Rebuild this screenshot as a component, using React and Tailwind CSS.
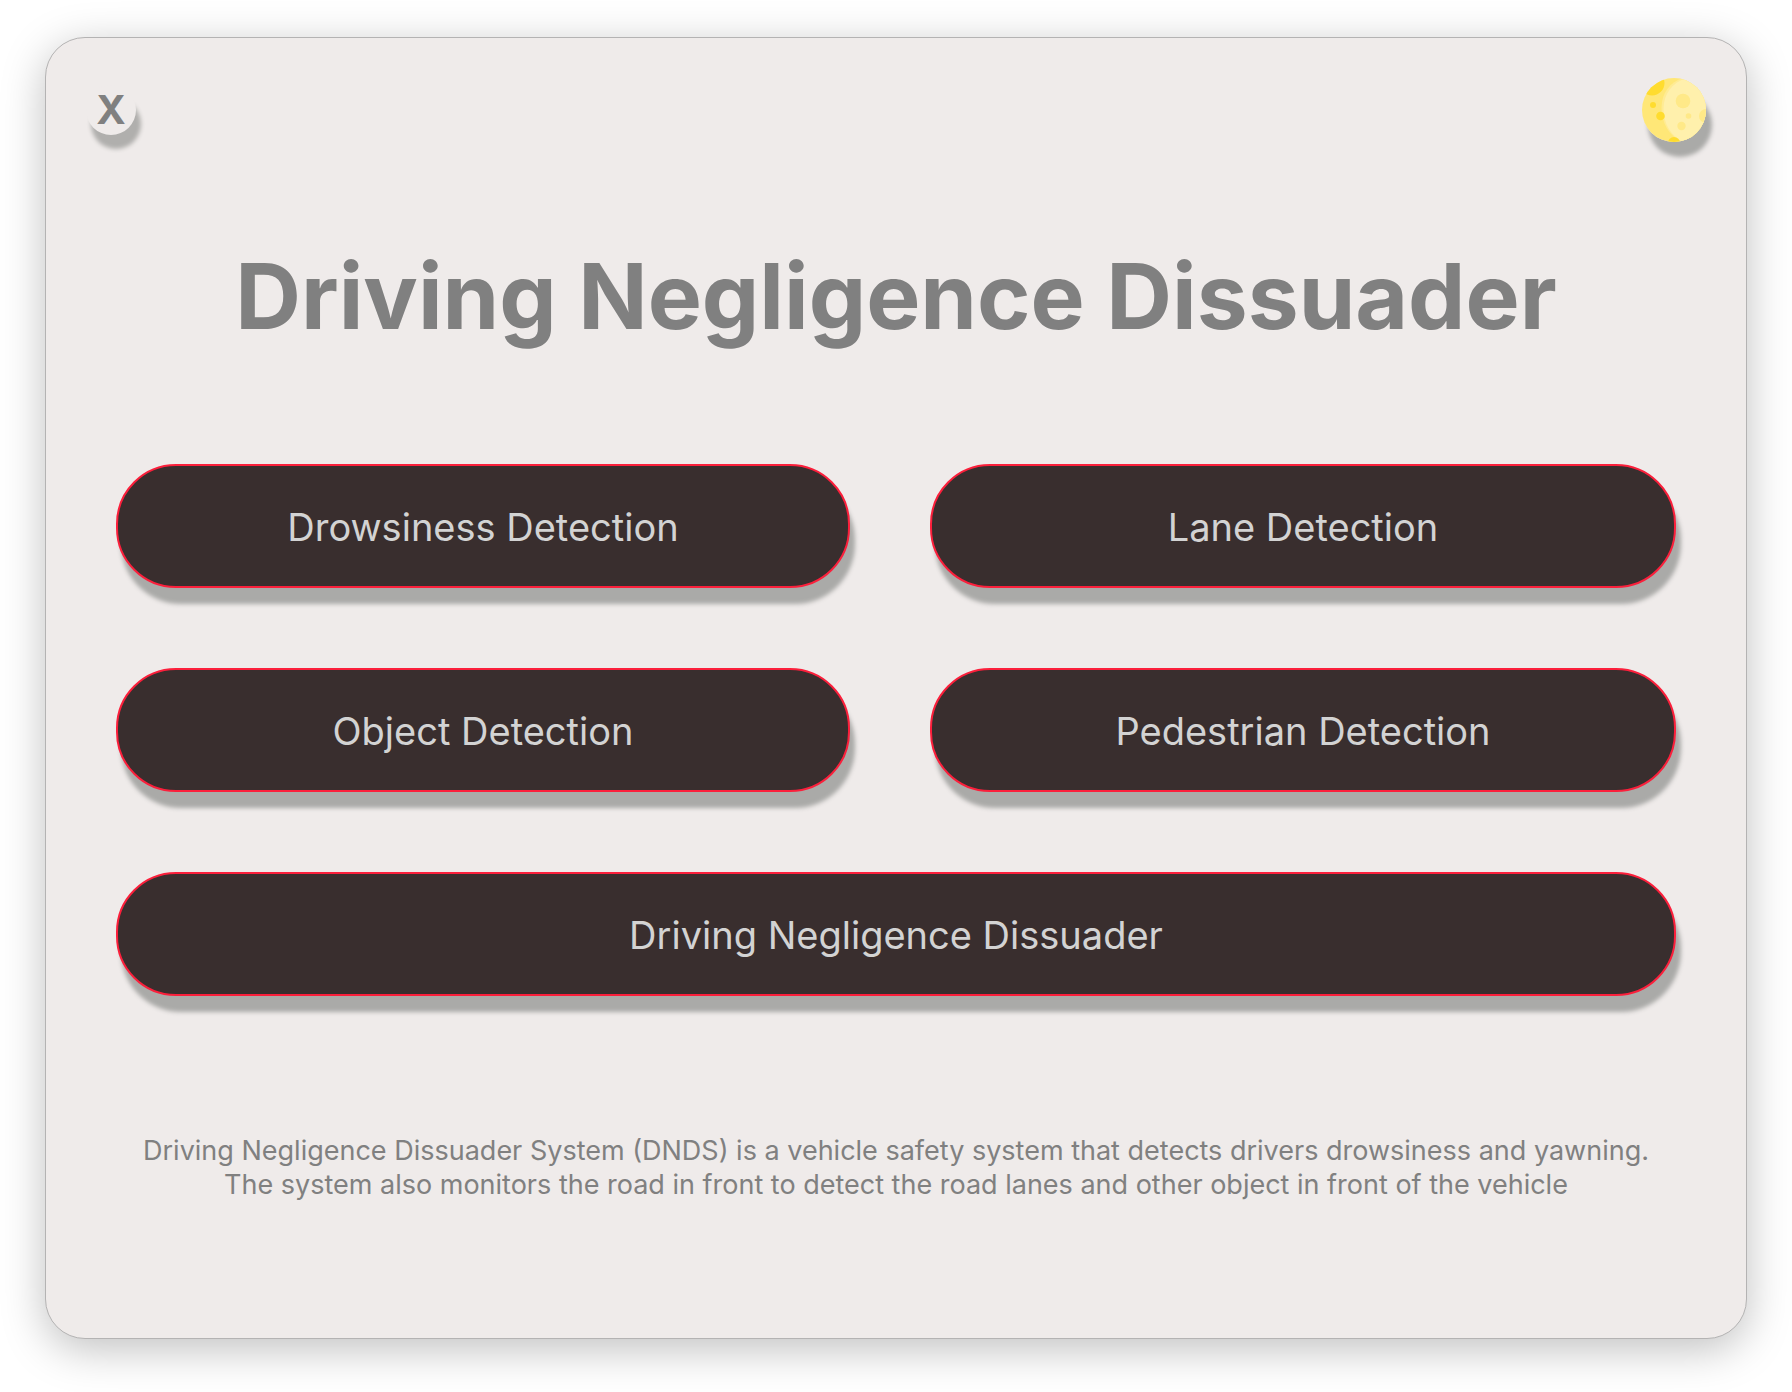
const rows = [
  "Drowsiness Detection",
  "Lane Detection",
  "Object Detection",
  "Pedestrian Detection",
];

const pill =
  "flex h-[124px] items-center justify-center rounded-[60px] border-2 border-[#fb1f3b] bg-[#392e2e] pt-0.5 text-[38px] text-[#d3d3d3] shadow-[5px_16px_4px_#aaaaa8]";

function Moon() {
  return (
    <svg viewBox="0 0 64 64" className="size-16" aria-hidden="true">
      <defs>
        <clipPath id="disc">
          <circle cx="32" cy="32" r="32" />
        </clipPath>
      </defs>
      <g clipPath="url(#disc)">
        <rect width="64" height="64" fill="#ffe777" />
        <circle cx="10" cy="5" r="12.5" fill="#ffdc2e" />
        <path d="M41 0C28 4 19.500 15 19.500 30s8 28 20 34H64V0Z" fill="#ffeb94" />
        <path d="M44 0C30 5 21.500 16 21.500 31s8 28 20 33H64V0Z" fill="#fff0ac" />
        <circle cx="11" cy="27" r="3" fill="#ffdc2e" />
        <circle cx="18.500" cy="38" r="4.300" fill="#ffdc2e" />
        <circle cx="32" cy="65" r="6" fill="#ffdc2e" />
        <circle cx="41" cy="23" r="7.300" fill="#ffe988" />
        <circle cx="46.500" cy="38" r="2.800" fill="#ffe988" />
        <circle cx="39.500" cy="48" r="4.200" fill="#ffe988" />
        <circle cx="64" cy="38" r="7" fill="#ffe988" />
      </g>
    </svg>
  );
}

export default function App() {
  return (
    <div className="min-h-screen bg-white px-[45px] pt-[37px] pb-[53px] font-['Inter',sans-serif]">
      <main className="rounded-[40px] border border-[#b4b3b3] bg-[#efebea] px-[70px] pb-[136px] shadow-[0_10px_44px_rgba(0,0,0,0.25)]">
        <header className="-mx-[30px] flex items-center justify-between pt-10">
          <button
            type="button"
            aria-label="Close"
            className="flex size-[50px] items-center justify-center rounded-full bg-[#efebea] text-[40px] font-bold text-[#808080] shadow-[5px_14px_4px_#b0afad]"
          >
            X
          </button>
          <button
            type="button"
            aria-label="Toggle theme"
            className="size-16 rounded-full shadow-[6px_15px_4px_#aaaaa8]"
          >
            <Moon />
          </button>
        </header>
        <h1 className="mt-[96px] text-center text-[91px] leading-[116px] font-bold whitespace-nowrap text-[#808080]">
          Driving Negligence Dissuader
        </h1>
        <div className="mt-[110px] grid grid-cols-[734fr_746fr] gap-20">
          {rows.map((label) => (
            <button key={label} type="button" className={pill}>
              {label}
            </button>
          ))}
          <button type="button" className={`${pill} col-span-2`}>
            Driving Negligence Dissuader
          </button>
        </div>
        <p className="mt-[138px] text-center text-[27px] leading-[34px] whitespace-nowrap text-[#808080]">
          Driving Negligence Dissuader System (DNDS) is a vehicle safety system that detects drivers drowsiness and yawning.
          <br />
          The system also monitors the road in front to detect the road lanes and other object in front of the vehicle
        </p>
      </main>
    </div>
  );
}
